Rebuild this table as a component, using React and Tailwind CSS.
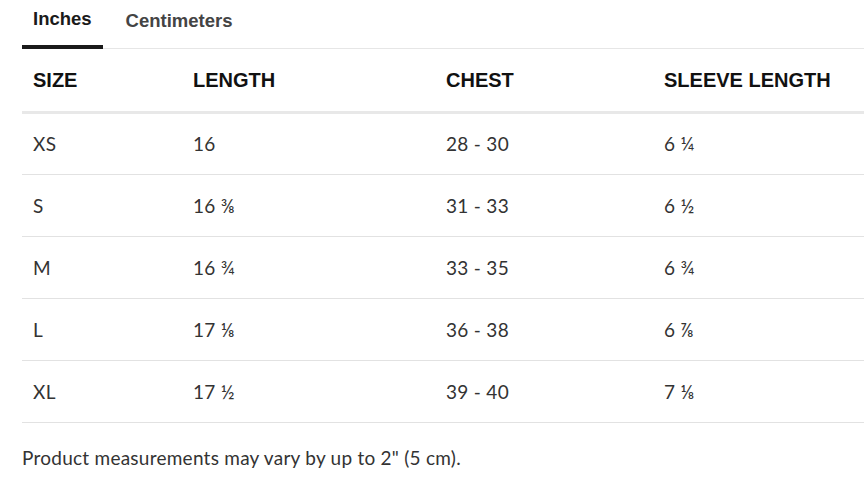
const rows = [
  ["XS", "16", "28 - 30", "6 ¼"],
  ["S", "16 ⅜", "31 - 33", "6 ½"],
  ["M", "16 ¾", "33 - 35", "6 ¾"],
  ["L", "17 ⅛", "36 - 38", "6 ⅞"],
  ["XL", "17 ½", "39 - 40", "7 ⅛"],
];

function App() {
  return (
    <div className="w-[864px] h-[501px] overflow-hidden bg-white pl-[22px] text-[#333]">
      <div className="flex border-b border-[#e6e6e6]">
        <button className="px-[11px] pt-[5px] pb-[12px] border-b-[4px] border-[#1a1a1a] -mb-px text-[18.5px] font-bold text-[#1a1a1a] font-['Liberation_Sans',Arial,sans-serif]">
          Inches
        </button>
        <button className="ml-[12px] px-[11px] pt-[5px] pb-[12px] text-[18.5px] font-bold text-[#444] font-['Liberation_Sans',Arial,sans-serif]">
          Centimeters
        </button>
      </div>
      <table className="w-full border-collapse table-fixed">
        <colgroup>
          <col className="w-[160px]" />
          <col className="w-[253px]" />
          <col className="w-[218px]" />
          <col />
        </colgroup>
        <thead>
          <tr className="h-[64px] border-b-[3px] border-[#e8e8e8]">
            {["SIZE", "LENGTH", "CHEST", "SLEEVE LENGTH"].map((h) => (
              <th
                key={h}
                className="text-left pl-[11px] text-[20px] font-bold text-[#111] font-['Liberation_Sans',Arial,sans-serif] whitespace-nowrap"
              >
                {h}
              </th>
            ))}
          </tr>
        </thead>
        <tbody>
          {rows.map((r) => (
            <tr key={r[0]} className="h-[62px] border-b border-[#e2e2e2]">
              {r.map((c, i) => (
                <td
                  key={i}
                  className="pl-[11px] text-[19px] tracking-[0.3px] text-[#333] font-['Lato',sans-serif] whitespace-nowrap"
                >
                  {c}
                </td>
              ))}
            </tr>
          ))}
        </tbody>
      </table>
      <p className="mt-[21px] text-[19px] tracking-[0.25px] text-[#333] font-['Lato',sans-serif]">
        Product measurements may vary by up to 2" (5 cm).
      </p>
    </div>
  );
}

export default App;
